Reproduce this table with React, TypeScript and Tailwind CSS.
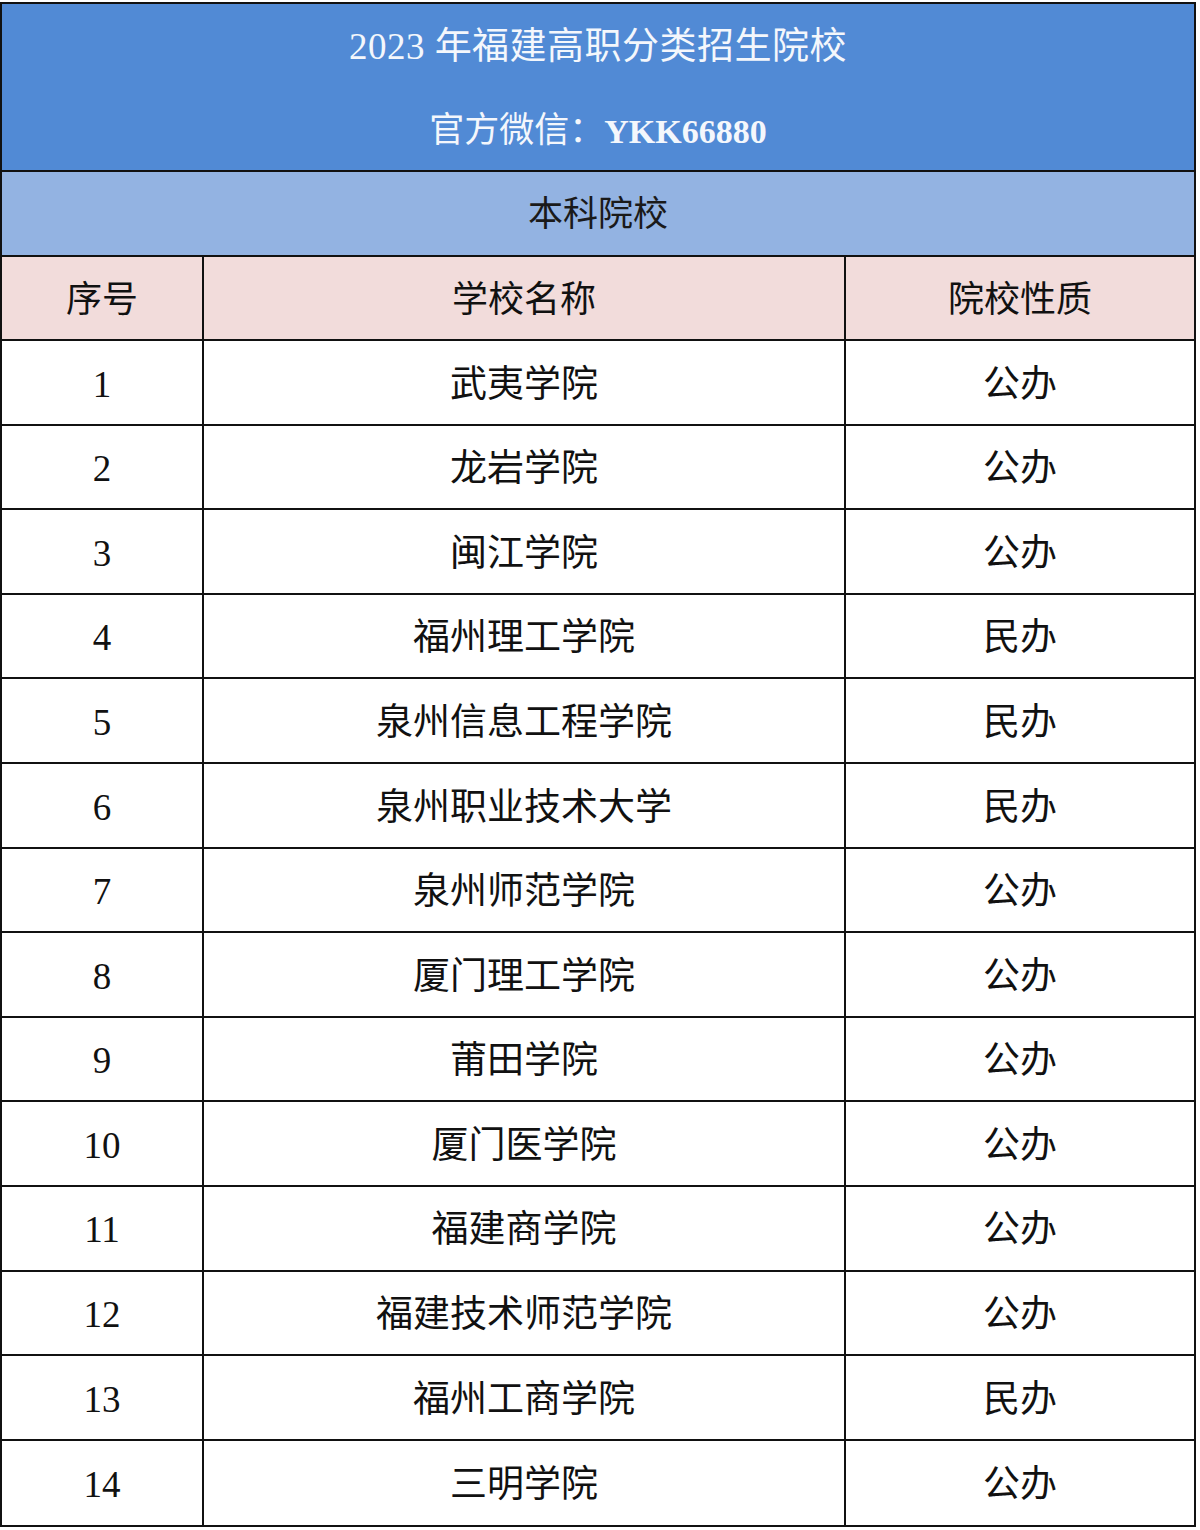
import React from "react";

const rows: [string, string, string][] = [
  ["1", "武夷学院", "公办"],
  ["2", "龙岩学院", "公办"],
  ["3", "闽江学院", "公办"],
  ["4", "福州理工学院", "民办"],
  ["5", "泉州信息工程学院", "民办"],
  ["6", "泉州职业技术大学", "民办"],
  ["7", "泉州师范学院", "公办"],
  ["8", "厦门理工学院", "公办"],
  ["9", "莆田学院", "公办"],
  ["10", "厦门医学院", "公办"],
  ["11", "福建商学院", "公办"],
  ["12", "福建技术师范学院", "公办"],
  ["13", "福州工商学院", "民办"],
  ["14", "三明学院", "公办"],
];

const font = { fontFamily: '"Liberation Serif", "Noto Sans CJK SC", serif' };

export default function App() {
  return (
    <div className="w-[1200px] h-[1530px] bg-white pt-[2px]" style={font}>
      <div className="w-[1196px] border-2 border-[#111] flex flex-col">
        <div className="h-[168px] bg-[#518ad5] border-b-2 border-[#111] flex flex-col items-center text-[#f4f7fc]">
          <div className="h-[84px] flex items-center text-[37px] tracking-[0.5px] pt-[2px]">
            2023 年福建高职分类招生院校
          </div>
          <div className="h-[84px] flex items-center text-[35px] pt-[6px]">
            <span>官方微信：</span>
            <span className="font-bold text-[34px]">YKK66880</span>
          </div>
        </div>
        <div className="h-[85px] bg-[#93b3e2] border-b-2 border-[#111] flex items-center justify-center text-[35px] text-[#1a1a1a] pt-[4px]">
          本科院校
        </div>
        <div className="h-[84px] bg-[#f2dcdb] border-b-2 border-[#111] flex text-[36px] text-[#111]">
          <div className="w-[202px] border-r-2 border-[#111] flex items-center justify-center pt-[4px]">序号</div>
          <div className="w-[642px] border-r-2 border-[#111] flex items-center justify-center pt-[4px]">学校名称</div>
          <div className="flex-1 flex items-center justify-center pt-[4px]">院校性质</div>
        </div>
        {rows.map((r, i) => (
          <div
            key={r[0]}
            className={`h-[84.6px] flex text-[37px] text-[#111] ${i < rows.length - 1 ? "border-b-2 border-[#111]" : ""}`}
          >
            <div className="w-[202px] border-r-2 border-[#111] flex items-center justify-center text-[37px] pt-[4px]">{r[0]}</div>
            <div className="w-[642px] border-r-2 border-[#111] flex items-center justify-center pt-[4px]">{r[1]}</div>
            <div className="flex-1 flex items-center justify-center pt-[4px]">{r[2]}</div>
          </div>
        ))}
      </div>
    </div>
  );
}
